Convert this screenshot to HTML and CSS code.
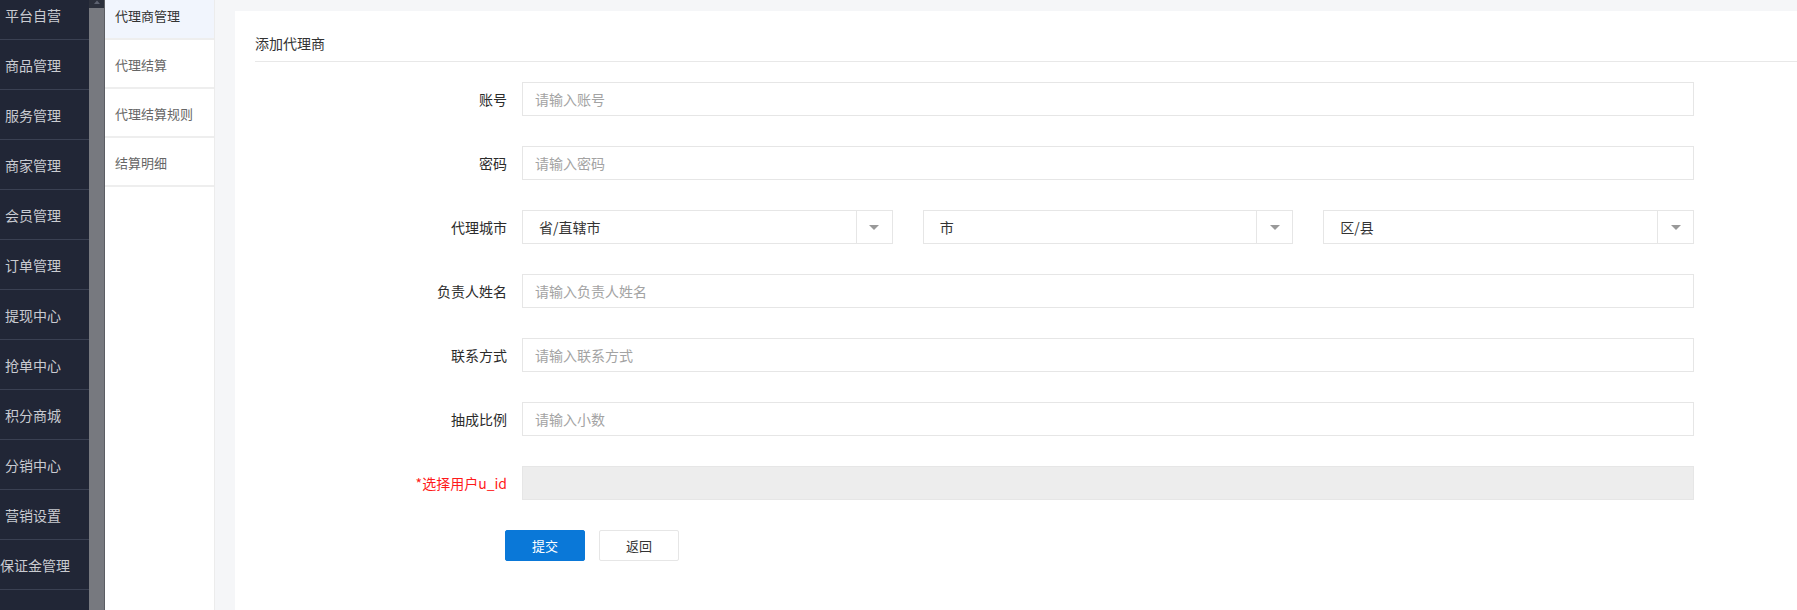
FILE: index.html
```html
<!DOCTYPE html>
<html lang="zh-CN">
<head>
<meta charset="utf-8">
<title>添加代理商</title>
<link rel="stylesheet" href="styles.css">
</head>
<body>
<div class="app">
  <nav class="sidebar">
    <ul class="side-list">
      <li><span>平台自营</span></li>
      <li><span>商品管理</span></li>
      <li><span>服务管理</span></li>
      <li><span>商家管理</span></li>
      <li><span>会员管理</span></li>
      <li><span>订单管理</span></li>
      <li><span>提现中心</span></li>
      <li><span>抢单中心</span></li>
      <li><span>积分商城</span></li>
      <li><span>分销中心</span></li>
      <li><span>营销设置</span></li>
      <li><span>保证金管理</span></li>
      <li><span></span></li>
    </ul>
  </nav>
  <div class="scrollbar">
    <div class="scroll-top">
      <svg width="8" height="4" viewBox="0 0 8 4"><path d="M1 4 L4 0.5 L7 4 Z" fill="#5d6270"/></svg>
    </div>
  </div>
  <aside class="submenu">
    <ul class="sub-list">
      <li class="active">代理商管理</li>
      <li>代理结算</li>
      <li>代理结算规则</li>
      <li>结算明细</li>
    </ul>
  </aside>
  <main class="main">
    <section class="card">
      <div class="card-title">添加代理商</div>
      <form class="form">
        <div class="row">
          <label class="label">账号</label>
          <div class="field"><input class="input" type="text" placeholder="请输入账号"></div>
        </div>
        <div class="row">
          <label class="label">密码</label>
          <div class="field"><input class="input" type="text" placeholder="请输入密码"></div>
        </div>
        <div class="row">
          <label class="label">代理城市</label>
          <div class="field selects">
            <div class="select"><span class="select-text">省/直辖市</span><span class="select-arrow"><i class="tri"></i></span></div>
            <div class="select"><span class="select-text">市</span><span class="select-arrow"><i class="tri"></i></span></div>
            <div class="select"><span class="select-text">区/县</span><span class="select-arrow"><i class="tri"></i></span></div>
          </div>
        </div>
        <div class="row">
          <label class="label">负责人姓名</label>
          <div class="field"><input class="input" type="text" placeholder="请输入负责人姓名"></div>
        </div>
        <div class="row">
          <label class="label">联系方式</label>
          <div class="field"><input class="input" type="text" placeholder="请输入联系方式"></div>
        </div>
        <div class="row">
          <label class="label">抽成比例</label>
          <div class="field"><input class="input" type="text" placeholder="请输入小数"></div>
        </div>
        <div class="row">
          <label class="label required">*选择用户u_id</label>
          <div class="field"><div class="input disabled"></div></div>
        </div>
        <div class="actions">
          <button type="button" class="btn btn-primary">提交</button>
          <button type="button" class="btn btn-default">返回</button>
        </div>
      </form>
    </section>
  </main>
</div>
</body>
</html>
```
FILE: styles.css
```css
* { box-sizing: border-box; }
html, body { margin: 0; padding: 0; }
body {
  font-family: "Noto Sans CJK SC", "Noto Sans", "Liberation Sans", sans-serif;
  font-size: 14px;
  color: #333;
  width: 1797px;
  height: 610px;
  overflow: hidden;
}
ul { list-style: none; margin: 0; padding: 0; }

.app { display: flex; height: 610px; overflow: hidden; }

/* dark sidebar */
.sidebar { width: 89px; flex: none; background: #212636; overflow: hidden; }
.side-list { margin-top: -10px; }
.side-list li {
  height: 50px;
  border-bottom: 1px solid #3a4052;
  display: flex;
  align-items: center;
}
.side-list li span {
  display: block;
  width: 66px;
  text-align: center;
  white-space: nowrap;
  color: #c9cbd1;
  font-size: 14px;
  line-height: 20px;
}

/* scrollbar strip */
.scrollbar { width: 16px; flex: none; background: #77797f; border-right: 1px solid #5b5d63; }
.scroll-top { height: 8px; background: #2c303c; display: flex; justify-content: center; align-items: flex-start; }
.scroll-top svg { display: block; }

/* secondary menu */
.submenu { width: 110px; flex: none; background: #fff; border-right: 1px solid #ececec; }
.sub-list { margin-top: -9px; }
.sub-list li {
  height: 49px;
  border-bottom: 2px solid #eeeeee;
  padding-left: 10px;
  display: flex;
  align-items: center;
  font-size: 13px;
  color: #666;
  padding-top: 2px;
}
.sub-list li.active { background: #f1f5fd; color: #333; }

/* main */
.main { flex: 1; background: #f5f6f8; padding: 11px 0 0 20px; min-width: 0; }
.card { background: #fff; height: 100%; padding-left: 20px; }
.card-title {
  height: 51px;
  padding-top: 22px;
  line-height: 20px;
  font-size: 14px;
  color: #333;
  border-bottom: 1px solid #e8e8e8;
}

.form { padding-top: 20px; }
.row { display: flex; align-items: center; margin-bottom: 30px; height: 34px; }
.label {
  width: 252px;
  flex: none;
  text-align: right;
  font-size: 14px;
  color: #2b2b2b;
  white-space: nowrap;
}
.label.required { color: #ff1a1a; }
.field { margin-left: 15px; width: 1172px; flex: none; height: 34px; }
.input {
  display: block;
  width: 100%;
  height: 34px;
  border: 1px solid #e6e6e6;
  padding: 0 12px;
  font-family: inherit;
  font-size: 14px;
  color: #333;
  background: #fff;
  outline: none;
}
.input::placeholder { color: #a3a3a3; }
.input.disabled { background: #ededed; border-color: #e6e6e6; }

.selects { display: flex; gap: 30px; }
.select {
  flex: 1;
  display: flex;
  height: 34px;
  border: 1px solid #e6e6e6;
  background: #fff;
}
.select-text { flex: 1; padding-left: 16px; display: flex; align-items: center; font-size: 14px; color: #333; }
.select-arrow {
  width: 36px;
  flex: none;
  border-left: 1px solid #e6e6e6;
  display: flex;
  align-items: center;
  justify-content: center;
}
.tri {
  width: 0; height: 0;
  border-left: 5px solid transparent;
  border-right: 5px solid transparent;
  border-top: 5px solid #999;
}

.actions { display: flex; gap: 14px; padding-left: 250px; }
.btn {
  width: 80px;
  height: 31px;
  font-family: inherit;
  font-size: 13px;
  border-radius: 2px;
  cursor: pointer;
}
.btn-primary { background: #0a78d8; color: #fff; border: 1px solid #0a78d8; }
.btn-default { background: #fff; color: #333; border: 1px solid #e6e6e6; }
```
